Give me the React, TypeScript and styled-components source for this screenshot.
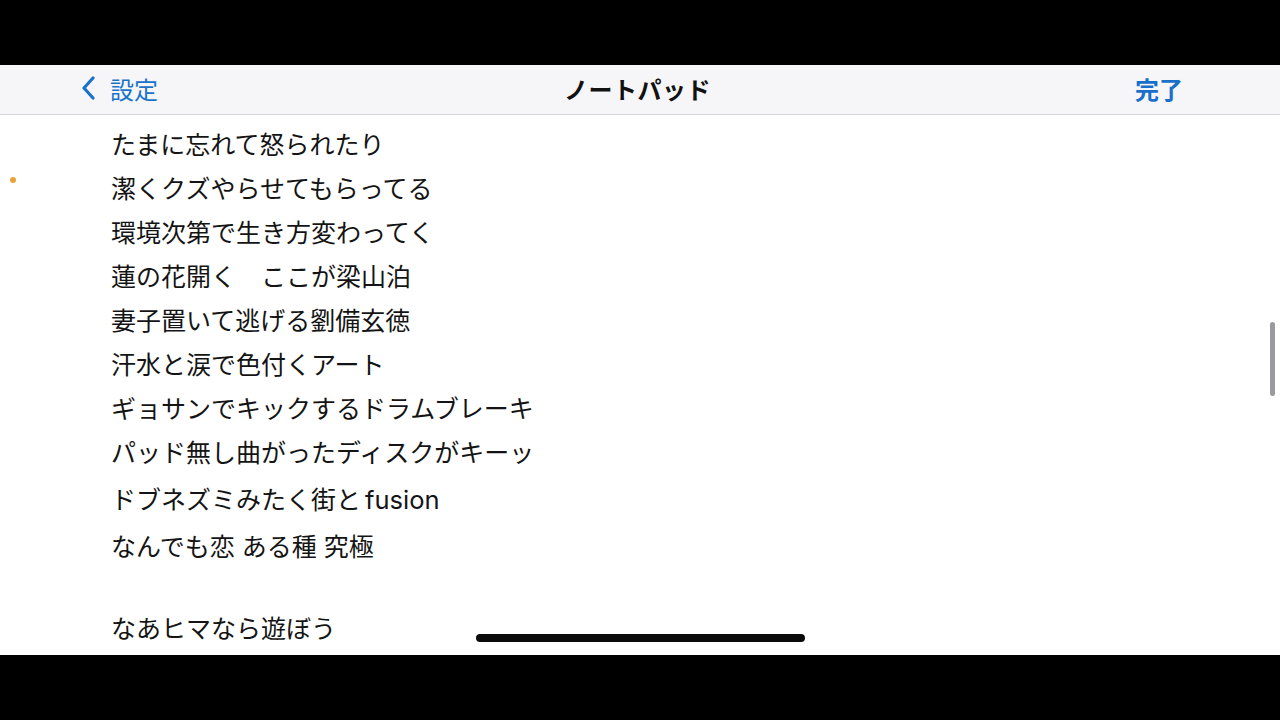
import React from "react"
import styled, { createGlobalStyle } from "styled-components"

const GlobalStyle = createGlobalStyle`
    html, body {
        margin: 0;
        padding: 0;
        background: #000;
    }
    body {
        font-family: "Inter", "Noto Sans CJK JP", sans-serif;
    }
`

const Screen = styled.div`
    width: 1280px;
    height: 720px;
    background: #000;
    display: flex;
    flex-direction: column;
    padding: 65px 0;
    box-sizing: border-box;
    overflow: hidden;
`

const Phone = styled.div`
    position: relative;
    flex: 1;
    display: flex;
    flex-direction: column;
    background: #fff;
    overflow: hidden;
`

const NavBar = styled.div`
    height: 50px;
    flex-shrink: 0;
    box-sizing: border-box;
    background: #f6f6f8;
    border-bottom: 1px solid #d4d4d8;
    display: grid;
    grid-template-columns: 1fr auto 1fr;
    align-items: center;
    padding: 0 97px 3px 80px;
`

const BackButton = styled.div`
    display: flex;
    align-items: center;
    gap: 12px;
    color: #1a73c8;
    font-size: 24px;
    font-family: "Noto Sans CJK JP", sans-serif;
`

const Title = styled.div`
    font-size: 24px;
    font-weight: 700;
    color: #111;
    font-family: "Noto Sans CJK JP", sans-serif;
    margin-left: 12px;
    letter-spacing: 0.5px;
`

const DoneButton = styled.div`
    justify-self: end;
    font-size: 24px;
    font-weight: 700;
    color: #1a6fc8;
    font-family: "Noto Sans CJK JP", sans-serif;
`

const Body = styled.div`
    flex: 1;
    padding: 8px 0 0 111px;
    display: flex;
    flex-direction: column;
`

const Line = styled.div<{ $h: number }>`
    height: ${p => p.$h}px;
    line-height: ${p => p.$h}px;
    font-size: 25px;
    color: #141414;
    white-space: pre;
    font-family: "Inter", "Noto Sans CJK JP", sans-serif;
`

const Latin = styled.span`
    margin-left: 4px;
    font-size: 25.5px;
`

const Dot = styled.div`
    position: absolute;
    left: 10px;
    top: 112px;
    width: 6px;
    height: 6px;
    border-radius: 50%;
    background: #e8a33a;
`

const ScrollThumb = styled.div`
    position: absolute;
    right: 5px;
    top: 257px;
    width: 5px;
    height: 74px;
    border-radius: 3px;
    background: #9a9a9e;
`

const HomeIndicator = styled.div`
    position: absolute;
    left: 476px;
    bottom: 13px;
    width: 329px;
    height: 8px;
    border-radius: 4px;
    background: #0a0a0a;
`

const lines: [React.ReactNode, number][] = [
    ["たまに忘れて怒られたり", 44],
    ["潔くクズやらせてもらってる", 44],
    ["環境次第で生き方変わってく", 44],
    ["蓮の花開く　ここが梁山泊", 44],
    ["妻子置いて逃げる劉備玄徳", 44],
    ["汗水と涙で色付くアート", 44],
    ["ギョサンでキックするドラムブレーキ", 44],
    ["パッド無し曲がったディスクがキーッ", 44],
    [<>ドブネズミみたく街と<Latin>fusion</Latin></>, 50],
    ["なんでも恋 ある種 究極", 44],
    [" ", 40],
    ["なあヒマなら遊ぼう", 40],
]

export default function App() {
    return (
        <Screen>
            <GlobalStyle />
            <Phone>
                <NavBar>
                    <BackButton>
                        <svg width="18" height="24" viewBox="0 0 18 24">
                            <path d="M13 2 L4 12 L13 22" fill="none" stroke="#1a73c8" strokeWidth="3.2" strokeLinecap="round" strokeLinejoin="round" />
                        </svg>
                        設定
                    </BackButton>
                    <Title>ノートパッド</Title>
                    <DoneButton>完了</DoneButton>
                </NavBar>
                <Body>
                    {lines.map(([text, h], i) => (
                        <Line key={i} $h={h}>{text}</Line>
                    ))}
                </Body>
                <Dot />
                <ScrollThumb />
                <HomeIndicator />
            </Phone>
        </Screen>
    )
}
